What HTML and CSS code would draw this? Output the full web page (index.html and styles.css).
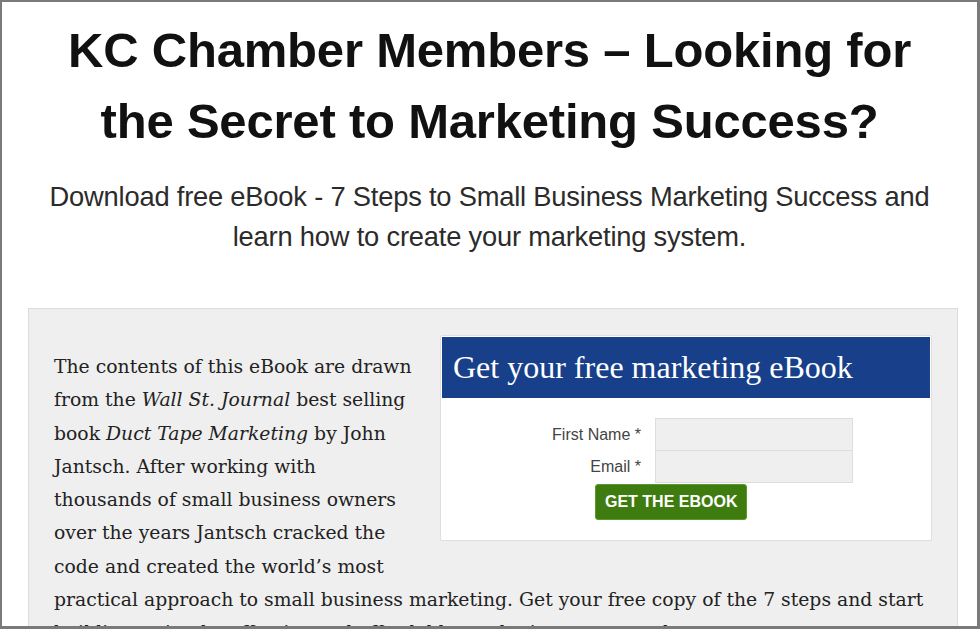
FILE: index.html
```html
<!DOCTYPE html>
<html>
<head>
<meta charset="utf-8">
<link rel="stylesheet" href="styles.css">
</head>
<body>
<div class="frame">
  <h1 class="title">KC Chamber Members – Looking for the Secret to Marketing Success?</h1>
  <p class="subtitle">Download free eBook - 7 Steps to Small Business Marketing Success and learn how to create your marketing system.</p>
  <div class="panel">
    <div class="formbox">
      <div class="formhead">Get your free marketing eBook</div>
      <div class="formbody">
        <div class="row"><label>First Name *</label><span class="input"></span></div>
        <div class="row"><label>Email *</label><span class="input"></span></div>
        <div class="btnrow"><span class="btn">GET THE EBOOK</span></div>
      </div>
    </div>
    <p class="copy">The contents of this eBook are drawn from the <em>Wall St. Journal</em> best selling book <em>Duct Tape Marketing</em> by John Jantsch. After working with thousands of small business owners over the years Jantsch cracked the code and created the world’s most practical approach to small business marketing. Get your free copy of the 7 steps and start building a simple, effective and affordable marketing system today.</p>
  </div>
</div>
</body>
</html>
```
FILE: styles.css
```css
html, body { margin: 0; padding: 0; background: #fff; }
.frame {
  width: 980px; height: 629px; box-sizing: border-box;
  border: 2px solid #7a7a7a; border-right-width: 3px; border-bottom-width: 3px;
  overflow: hidden; background: #fff;
}
.title {
  margin: 13px 50px 0; text-align: center;
  font-family: "Liberation Sans", Arial, sans-serif; font-weight: bold;
  font-size: 49px; line-height: 71px; color: #111; letter-spacing: -0.2px;
}
.subtitle {
  margin: 20px 34px 0; text-align: center;
  font-family: "Liberation Sans", Arial, sans-serif;
  font-size: 27.3px; line-height: 40px; color: #2b2b2b; letter-spacing: -0.2px;
}
.panel {
  margin: 51px 19px 0 26px; background: #efefef; border: 1px solid #dcdcdc;
  padding: 26px 25px 40px 25px; height: 400px;
}
.formbox {
  float: right; width: 490px; background: #fff; border: 1px solid #dedede;
  border-radius: 2px; margin: 0 0 28px 25px;
}
.formhead {
  background: #173f8a; color: #fff; margin: 1px;
  font-family: "Liberation Serif", Georgia, serif; font-size: 32px; line-height: 61px;
  padding-left: 11px;
}
.formbody { padding: 19px 0 20px; font-family: "Liberation Sans", Arial, sans-serif; }
.row { display: flex; align-items: center; }
.row label { width: 200px; text-align: right; font-size: 16px; color: #444; padding-right: 14px; }
.input { width: 196px; height: 31px; background: #efefef; border: 1px solid #ddd; }
.row + .row .input { border-top: none; }
.btnrow { padding-left: 154px; margin-top: 1px; }
.btn {
  display: inline-block; background: #3f7c10; color: #fff; font-weight: bold;
  font-size: 16px; line-height: 34px; padding: 0 9px; border-radius: 3px;
  border: 1px solid #5a9a2a;
}
.copy {
  margin: 0; padding-top: 15px; font-family: "DejaVu Serif", Georgia, serif; font-size: 18.8px;
  line-height: 33.3px; color: #222;
}
```
